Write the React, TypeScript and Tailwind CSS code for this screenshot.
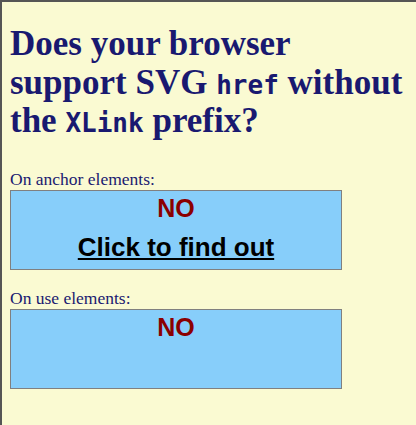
const serif = "font-['Liberation_Serif','Times_New_Roman',serif]";
const mono = "font-['DejaVu_Sans_Mono',monospace] text-[26px] leading-none";

function ResultBox({ link }: { link?: boolean }) {
  return (
    <div className="relative h-[80px] w-[332px] border border-[#808080] bg-[#87cefa] font-['Liberation_Sans',Arial,sans-serif] font-bold">
      <span className="absolute left-0 right-0 top-[2px] text-center text-[25px] leading-[30px] text-[#8b0000]">NO</span>
      {link && (
        <a href="#" className="absolute left-0 right-0 top-[41px] text-center text-[26px] leading-[30px] text-black underline">
          Click to find out
        </a>
      )}
    </div>
  );
}

export default function App() {
  return (
    <div className={`min-h-[425px] border-l-2 border-t-2 border-[#555555] bg-[#fafad2] px-[8px] text-[#191970] ${serif}`}>
      <h1 className="pt-[23px] text-[35px] font-bold leading-[38.5px]">
        Does your browser support SVG <code className={mono}>href</code> without the{' '}
        <code className={mono}>XLink</code> prefix?
      </h1>

      <p className="mt-[28px] text-[17.5px] leading-[20px]">On anchor elements:</p>
      <div className="mt-[1px]">
        <ResultBox link />
      </div>

      <p className="mt-[18px] text-[17.5px] leading-[20px]">On use elements:</p>
      <div className="mt-[1px]">
        <ResultBox />
      </div>
    </div>
  );
}
